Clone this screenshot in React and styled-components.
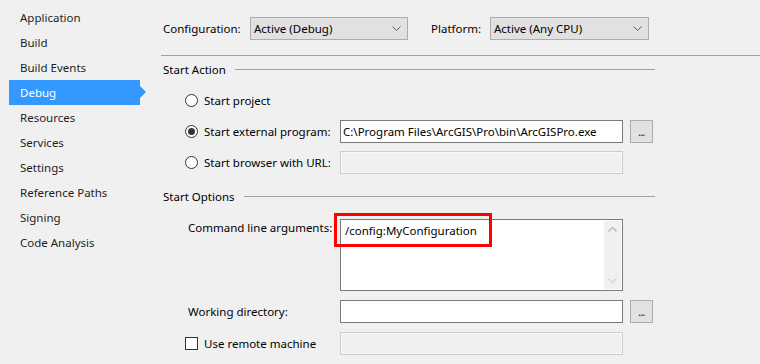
import styled, { createGlobalStyle } from 'styled-components';

const GlobalStyle = createGlobalStyle`
  html, body {
    margin: 0;
    padding: 0;
    background: #f0f0f0;
  }
  body {
    font-family: "Noto Sans", "Liberation Sans", sans-serif;
    font-size: 11.5px;
    color: #1e1e1e;
  }
`;

const navItems = [
  'Application',
  'Build',
  'Build Events',
  'Debug',
  'Resources',
  'Services',
  'Settings',
  'Reference Paths',
  'Signing',
  'Code Analysis',
];

const Page = styled.div`
  display: flex;
  width: 760px;
  height: 364px;
  overflow: hidden;
`;

const Sidebar = styled.nav`
  width: 161px;
  flex-shrink: 0;
  padding-top: 5px;
  display: flex;
  flex-direction: column;
`;

const NavItem = styled.div`
  position: relative;
  height: 25px;
  line-height: 25px;
  margin-left: 9px;
  width: 131px;
  padding-left: 11px;
  box-sizing: border-box;
  background: ${(p) => (p.$active ? '#3399ff' : 'transparent')};
  color: ${(p) => (p.$active ? '#ffffff' : '#1e1e1e')};

  &::after {
    content: '';
    display: ${(p) => (p.$active ? 'block' : 'none')};
    position: absolute;
    right: -6px;
    top: 6px;
    border-left: 6px solid #3399ff;
    border-top: 6px solid transparent;
    border-bottom: 6px solid transparent;
  }
`;

const Main = styled.main`
  flex: 1;
  min-width: 0;
  display: flex;
  flex-direction: column;
`;

const TopBar = styled.div`
  display: flex;
  align-items: center;
  margin-top: 17px;
  padding-left: 2px;
  height: 23px;
`;

const TopLabel = styled.span`
  width: ${(p) => p.$width}px;
  flex-shrink: 0;
  color: #000;
`;

const Select = styled.div`
  width: ${(p) => p.$width}px;
  flex-shrink: 0;
  height: 23px;
  box-sizing: border-box;
  border: 1px solid #adadad;
  background: #e1e1e1;
  display: flex;
  align-items: center;
  justify-content: space-between;
  padding: 0 6px 0 3px;
  margin-right: ${(p) => p.$gap || 0}px;
  color: #000;
`;

const Divider = styled.div`
  height: 1px;
  background: #a0a0a0;
  margin-top: 15px;
`;

const Section = styled.section`
  width: 494px;
  display: flex;
  flex-direction: column;
`;

const SectionHeader = styled.div`
  display: flex;
  align-items: center;
  height: 14px;
  line-height: 14px;
  margin-top: ${(p) => p.$top}px;
  padding-left: 2px;
  color: #000;

  &::after {
    content: '';
    flex: 1;
    height: 1px;
    background: #a0a0a0;
    margin-left: 9px;
    margin-bottom: 2px;
  }
`;

const Rows = styled.div`
  display: flex;
  flex-direction: column;
  gap: ${(p) => p.$gap}px;
  margin-top: ${(p) => p.$top}px;
  padding-left: 24px;
`;

const Row = styled.div`
  display: grid;
  grid-template-columns: 148px 283px 23px;
  column-gap: 7px;
  width: 468px;
  align-items: ${(p) => (p.$top ? 'start' : 'center')};
  min-height: 23px;
`;

const Choice = styled.label`
  display: flex;
  align-items: center;
  gap: 6px;
  min-width: 0;
  white-space: nowrap;
  color: #000;
`;

const Radio = styled.span`
  width: 13px;
  height: 13px;
  flex-shrink: 0;
  box-sizing: border-box;
  border: 1px solid #333;
  border-radius: 50%;
  background: #fff;
  display: flex;
  align-items: center;
  justify-content: center;

  &::after {
    content: '';
    display: ${(p) => (p.$checked ? 'block' : 'none')};
    width: 7px;
    height: 7px;
    border-radius: 50%;
    background: #333;
  }
`;

const Checkbox = styled.span`
  width: 13px;
  height: 13px;
  flex-shrink: 0;
  box-sizing: border-box;
  border: 1px solid #333;
  background: #fff;
`;

const FieldLabel = styled.span`
  padding-left: 3px;
  padding-top: ${(p) => (p.$top ? 2 : 0)}px;
  line-height: 14px;
  min-width: 0;
  white-space: nowrap;
  color: #000;
`;

const Input = styled.div`
  height: 23px;
  min-width: 0;
  box-sizing: border-box;
  border: 1px solid ${(p) => (p.$disabled ? '#cccccc' : '#7a7a7a')};
  background: ${(p) => (p.$disabled ? '#f0f0f0' : '#ffffff')};
  box-shadow: ${(p) => (p.$disabled ? 'inset 0 0 0 1px #f8f8f8' : 'none')};
  padding: 0 2px;
  line-height: 21px;
  color: #000;
  white-space: nowrap;
  overflow: hidden;
`;

const TextArea = styled.div`
  position: relative;
  height: 72px;
  min-width: 0;
  box-sizing: border-box;
  border: 1px solid #7a7a7a;
  background: #fff;
  display: flex;
`;

const AreaText = styled.div`
  flex: 1;
  padding: 3px 4px;
  line-height: 16px;
  color: #000;
`;

const ScrollBar = styled.div`
  width: 17px;
  margin: 1px 1px 1px 0;
  background: #f0f0f0;
  display: flex;
  flex-direction: column;
  justify-content: space-between;
  align-items: center;
  padding: 6px 0;
  box-sizing: border-box;
`;

const Highlight = styled.div`
  position: absolute;
  left: -7px;
  top: -7px;
  width: 158px;
  height: 34px;
  box-sizing: border-box;
  border: 3px solid #ff0000;
  pointer-events: none;
`;

const Browse = styled.button`
  width: 23px;
  height: 23px;
  box-sizing: border-box;
  border: 1px solid #adadad;
  background: #e1e1e1;
  padding: 0;
  font-family: inherit;
  font-size: 10px;
  line-height: 14px;
  color: #000;
  letter-spacing: -0.5px;
`;

const Chevron = ({ dir = 'down', color = '#606060' }) => (
  <svg width="9" height="5" viewBox="0 0 9 5">
    <path
      d={dir === 'down' ? 'M0.5 0.5 L4.5 4.5 L8.5 0.5' : 'M0.5 4.5 L4.5 0.5 L8.5 4.5'}
      fill="none"
      stroke={color}
      strokeWidth={dir === 'down' ? 1 : 1.6}
    />
  </svg>
);

export default function App() {
  return (
    <>
      <GlobalStyle />
      <Page>
        <Sidebar>
          {navItems.map((item) => (
            <NavItem key={item} $active={item === 'Debug'}>
              {item}
            </NavItem>
          ))}
        </Sidebar>
        <Main>
          <TopBar>
            <TopLabel $width={87}>Configuration:</TopLabel>
            <Select $width={158} $gap={23}>
              Active (Debug)
              <Chevron />
            </Select>
            <TopLabel $width={59}>Platform:</TopLabel>
            <Select $width={159}>
              Active (Any CPU)
              <Chevron />
            </Select>
          </TopBar>
          <Divider />

          <Section>
            <SectionHeader $top={7}>Start Action</SectionHeader>
            <Rows $gap={8} $top={12}>
              <Row>
                <Choice>
                  <Radio />
                  Start project
                </Choice>
              </Row>
              <Row>
                <Choice>
                  <Radio $checked />
                  Start external program:
                </Choice>
                <Input>C:\Program Files\ArcGIS\Pro\bin\ArcGISPro.exe</Input>
                <Browse>...</Browse>
              </Row>
              <Row>
                <Choice>
                  <Radio />
                  Start browser with URL:
                </Choice>
                <Input $disabled />
              </Row>
            </Rows>

            <SectionHeader $top={16}>Start Options</SectionHeader>
            <Rows $gap={9} $top={15}>
              <Row $top>
                <FieldLabel $top>Command line arguments:</FieldLabel>
                <TextArea>
                  <AreaText>/config:MyConfiguration</AreaText>
                  <ScrollBar>
                    <Chevron dir="up" color="#c0c0c0" />
                    <Chevron dir="down" color="#c0c0c0" />
                  </ScrollBar>
                  <Highlight />
                </TextArea>
              </Row>
              <Row>
                <FieldLabel>Working directory:</FieldLabel>
                <Input />
                <Browse>...</Browse>
              </Row>
              <Row>
                <Choice>
                  <Checkbox />
                  Use remote machine
                </Choice>
                <Input $disabled />
              </Row>
            </Rows>
          </Section>
        </Main>
      </Page>
    </>
  );
}
